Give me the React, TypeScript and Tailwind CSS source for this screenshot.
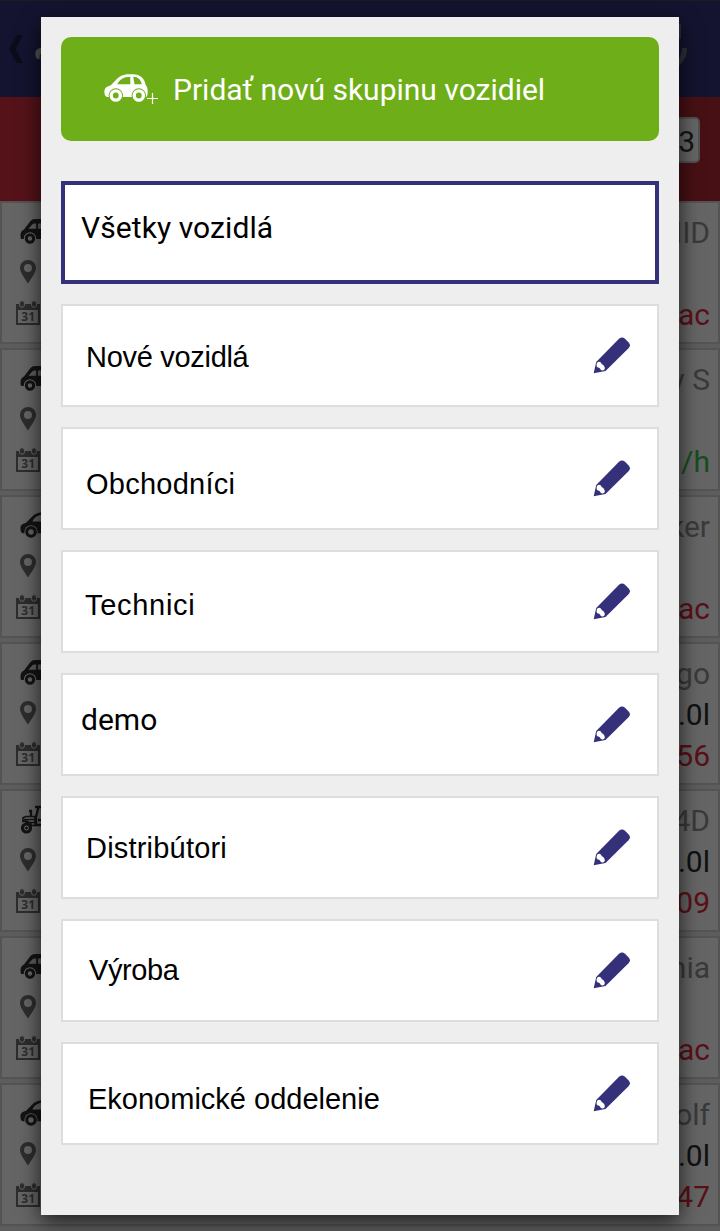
import React from "react";

type Vehicle = "van" | "beetle" | "tractor";

function Beetle({ className, hole }: { className: string; hole: string }) {
  return (
    <svg viewBox="0 0 44 28" className={className}>
      <path
        fill="currentColor"
        d="M3 23C1 22.500.4 20.500.4 17.500.5 14.500 2 12.800 6.500 11.600L11 7C14.500 3 18.500.3 25 .3h4C36.500.3 40.500 4.500 41.700 11c1.600 1.800 2 4 2 7 0 3-.6 5-2.300 5z"
      />
      <path className={hole} d="M13.300 10.300C15.500 5.800 19 3 26.300 2.800v7.500zM29.200 2.800c4.800.3 7.500 2.700 8.600 7.500h-7.300z" />
      <circle className={hole} cx="11.800" cy="21.500" r="7.200" />
      <circle className={hole} cx="34.800" cy="21.500" r="7.200" />
      <circle cx="11.800" cy="21.500" r="4.600" fill="none" stroke="currentColor" strokeWidth="3.400" />
      <circle cx="34.800" cy="21.500" r="4.600" fill="none" stroke="currentColor" strokeWidth="3.400" />
    </svg>
  );
}

function Van() {
  return (
    <svg viewBox="0 0 44 26" className="h-[26px] w-[44px]">
      <path fill="#131313" d="M1 21c-1-4-.5-8 3-9.500L10.500 3Q12 1 15 1H42v20z" />
      <path fill="#5f5f5f" d="M8.500 10.800 12.500 6.300Q13.300 5.600 14.500 5.600h1.700v5.200zM18 5.600h9v5.200h-9z" />
      <circle cx="10" cy="20.500" r="6.200" fill="#656565" />
      <circle cx="10" cy="20.500" r="3.700" fill="none" stroke="#131313" strokeWidth="3" />
    </svg>
  );
}

function Tractor() {
  return (
    <svg viewBox="0 0 44 30" className="-mt-px h-[30px] w-[44px]" fill="none" stroke="#131313">
      <circle cx="6.500" cy="23" r="4" strokeWidth="3.200" />
      <circle cx="6.500" cy="23" r="1" fill="#131313" />
      <path d="M3 16v-3.200l3-1.300h9v9h-3c-2-4-6-5-9-4zM4 14.500h10M5 17.500h9" strokeWidth="1.700" />
      <path d="M9 6h2V11.500M15 2h18M18.500 2 16 12v8h7M18 15h8v8" strokeWidth="2.300" />
    </svg>
  );
}

function VehicleIcon({ kind }: { kind: Vehicle }) {
  if (kind === "van") return <Van />;
  if (kind === "tractor") return <Tractor />;
  return <Beetle className="h-[26px] w-[41px] text-[#131313]" hole="fill-[#646464]" />;
}

function Pin() {
  return (
    <svg viewBox="0 0 16 24" className="ml-1 h-6 w-4">
      <path
        fill="#2d2d2d"
        fillRule="evenodd"
        d="M8 0a8 8 0 0 1 8 8c0 4-4 9.500-8 15.500C4 17.500 0 12 0 8a8 8 0 0 1 8-8zm0 4a4 4 0 1 0 0 8 4 4 0 0 0 0-8z"
      />
    </svg>
  );
}

function Calendar() {
  return (
    <svg viewBox="0 0 24 25" className="h-[25px] w-6">
      <path fill="#2d2d2d" fillRule="evenodd" d="M0 4h24v21H0zM2 10v13h20V10z" />
      <g fill="#2d2d2d" stroke="#646464">
        <rect x="3.500" y=".7" width="5" height="6.600" rx="2.500" />
        <rect x="15.500" y=".7" width="5" height="6.600" rx="2.500" />
      </g>
      <text x="12.200" y="21" textAnchor="middle" fill="#2d2d2d" fontSize="12" fontWeight="700" fontFamily="Open Sans, sans-serif">
        31
      </text>
    </svg>
  );
}

function Pencil() {
  return (
    <svg viewBox="0 0 38 38" className="mt-[30px] h-[38px] w-[38px]">
      <path
        fill="#34317a"
        d="M.7 37.200 3.200 26 26 2.800Q29 .4 32 2.800L35.700 6.500Q38.300 9.500 35.500 12.300L12.500 35z"
      />
      <path fill="#fff" d="M4.300 26.600C6 25 8.500 26.200 8.700 28.300 11 29 12.500 31.500 11.500 33.600 10.500 34.700 8.500 34.700 7.800 34 7.200 32.300 5.800 31.500 4.300 31.300 3.300 30 3.300 28.300 4.300 26.600z" />
    </svg>
  );
}

const cards: { kind: Vehicle; lines: [string, string, string]; tone: string }[] = [
  { kind: "van", lines: ["MID", "", "ac"], tone: "text-[#5a1018]" },
  { kind: "van", lines: ["y S", "", "/h"], tone: "text-[#164d1e]" },
  { kind: "beetle", lines: ["ker", "", "ac"], tone: "text-[#5a1018]" },
  { kind: "van", lines: ["go", ".0l", "56"], tone: "text-[#5a1018]" },
  { kind: "tractor", lines: ["4D", ".0l", "09"], tone: "text-[#5a1018]" },
  { kind: "van", lines: ["nia", "", "ac"], tone: "text-[#5a1018]" },
  { kind: "beetle", lines: ["olf", ".0l", "47"], tone: "text-[#5a1018]" },
];

const groups = [
  { name: "Nové vozidlá", cls: "pl-[23px] pt-[33px] font-['Liberation_Sans',sans-serif] text-[29px] tracking-[-0.3px]" },
  { name: "Obchodníci", cls: "pl-[23px] pt-[37px] font-['Liberation_Sans',sans-serif] text-[29px] tracking-[0.25px]" },
  { name: "Technici", cls: "pl-[22px] pt-[35px] font-['Liberation_Sans',sans-serif] text-[29px] tracking-[0.7px]" },
  { name: "demo", cls: "pl-[18px] pt-[27px] font-[Roboto,sans-serif] text-[30px]" },
  { name: "Distribútori", cls: "pl-[23px] pt-[32px] font-['Liberation_Sans',sans-serif] text-[29px] tracking-[0.2px]" },
  { name: "Výroba", cls: "pl-[26px] pt-[31px] font-['Liberation_Sans',sans-serif] text-[29px] tracking-[-0.4px]" },
  { name: "Ekonomické oddelenie", cls: "pl-[25px] pt-[37px] font-['Liberation_Sans',sans-serif] text-[29px]" },
];

function VehicleList() {
  return (
    <div className="flex h-full flex-col bg-[#5d5d5d]">
      <header className="flex h-[97px] shrink-0 justify-between border-t border-[#1c1c1c] bg-[#141430]">
        <div className="flex">
          <svg viewBox="0 0 14 28" className="ml-[9px] mt-[34px] h-7 w-[14px]">
            <path fill="#0b0c1c" d="M7.500 0H14L6.500 14 14 28H7.500L0 14z" />
          </svg>
          <Beetle className="ml-3 mt-[35px] h-7 w-11 text-[#565656]" hole="fill-[#141430]" />
        </div>
        <svg viewBox="0 0 30 50" className="mr-[33px] mt-[22px] h-[50px] w-[30px]">
          <path fill="#303039" d="M22 1h2v15h-2zM10 45c8-2 14-9 15-20h5c0 12-8 21-20 23z" />
        </svg>
      </header>
      <div className="flex h-[104px] shrink-0 justify-end bg-linear-to-r from-[#551319] to-[#471014] pr-5 pt-5">
        <div className="h-[46px] w-20 rounded-[5px] border-2 border-[#515151] bg-[#666] pr-[3px] text-right text-[30px] leading-[46px] text-[#151515]">
          3
        </div>
      </div>
      <div className="flex flex-col gap-1">
        {cards.map((c, i) => (
          <div key={i} className="flex h-[143px] shrink-0 justify-between border-2 border-[#545454] bg-[#656565] pr-2">
            <div className="flex flex-col pl-[14px] pt-[15px]">
              <div className="h-[42px] pl-1">
                <VehicleIcon kind={c.kind} />
              </div>
              <div className="h-10">
                <Pin />
              </div>
              <Calendar />
            </div>
            <div className="flex flex-col pt-[9px] text-right text-[30px] leading-[41px]">
              <span className="h-[41px] text-[#3a3a3a]">{c.lines[0]}</span>
              <span className="h-[41px] text-[#111]">{c.lines[1]}</span>
              <span className={c.tone}>{c.lines[2]}</span>
            </div>
          </div>
        ))}
      </div>
    </div>
  );
}

export default function App() {
  return (
    <div className="relative h-[1231px] w-[720px] overflow-hidden font-[Roboto,sans-serif]">
      <VehicleList />
      <div className="absolute left-[41px] top-[17px] flex h-[1198px] w-[638px] flex-col bg-[#eee] p-5 shadow-[0_6px_20px_rgba(0,0,0,0.75)]">
        <button className="flex h-[104px] w-full shrink-0 items-start rounded-[10px] bg-[#6eae18] pl-[43px] text-white">
          <Beetle className="mt-[37px] h-7 w-11" hole="fill-[#6eae18]" />
          <svg viewBox="0 0 12 12" className="-ml-[2px] mt-[55px] h-3 w-3">
            <path d="M6.500 1v11M1 6.500h11" stroke="#fff" strokeWidth="1.200" />
          </svg>
          <span className="ml-[15px] mt-[35px] whitespace-nowrap text-[30px] leading-9">Pridať novú skupinu vozidiel</span>
        </button>
        <div className="mt-10 flex flex-col gap-5">
          <div className="h-[103px] border-4 border-[#34317a] bg-white pl-4 pt-[25px] text-[30px] leading-9 tracking-[0.08px] text-black">
            Všetky vozidlá
          </div>
          {groups.map((g) => (
            <div key={g.name} className="flex h-[103px] justify-between border-2 border-[#ddd] bg-white pr-[26px]">
              <span className={`whitespace-nowrap leading-9 text-black ${g.cls}`}>{g.name}</span>
              <Pencil />
            </div>
          ))}
        </div>
      </div>
    </div>
  );
}
